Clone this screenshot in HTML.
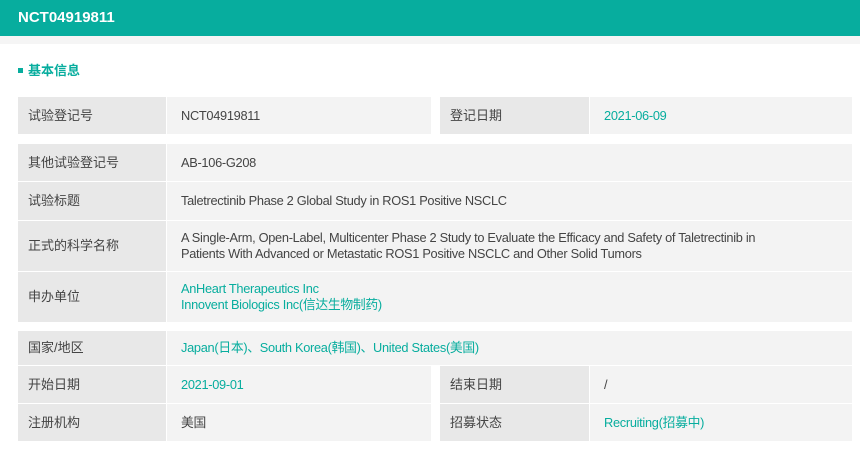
<!DOCTYPE html>
<html><head><meta charset="utf-8"><style>
*{margin:0;padding:0;box-sizing:border-box}
body{width:860px;height:460px;background:#fff;font-family:"Liberation Sans","Noto Sans CJK SC",sans-serif;font-size:13px;color:#444;position:relative;overflow:hidden}
.hd{height:36px;background:#07ad9e;color:#fff;font-weight:bold;font-size:15px;line-height:36px;padding-left:18px}
.strip{height:8px;background:#f5f5f5}
.sec{position:absolute;left:18px;top:63px;color:#07ad9e;font-weight:bold;font-size:13px;line-height:16px}
.sec i{display:inline-block;width:5px;height:5px;background:#07ad9e;margin-right:5px;vertical-align:2px}
.c{position:absolute;display:flex;align-items:center;padding-left:10px;line-height:16px}
.l{background:#e8e8e8}
.v{background:#f3f3f3;padding-left:14px;letter-spacing:-0.3px;font-size:12.8px}
.t{color:#07ad9e}
</style></head><body>
<div class="hd">NCT04919811</div>
<div class="strip"></div>
<div class="sec"><i></i>基本信息</div>

<div class="c l" style="left:18px;top:97px;width:148px;height:37px">试验登记号</div>
<div class="c v" style="left:167px;top:97px;width:264px;height:37px">NCT04919811</div>
<div class="c l" style="left:440px;top:97px;width:149px;height:37px">登记日期</div>
<div class="c v t" style="left:590px;top:97px;width:262px;height:37px">2021-06-09</div>

<div class="c l" style="left:18px;top:144px;width:148px;height:37px">其他试验登记号</div>
<div class="c v" style="left:167px;top:144px;width:685px;height:37px">AB-106-G208</div>
<div class="c l" style="left:18px;top:182px;width:148px;height:38px">试验标题</div>
<div class="c v" style="left:167px;top:182px;width:685px;height:38px">Taletrectinib Phase 2 Global Study in ROS1 Positive NSCLC</div>
<div class="c l" style="left:18px;top:221px;width:148px;height:50px">正式的科学名称</div>
<div class="c v" style="left:167px;top:221px;width:685px;height:50px;padding-right:60px">A Single-Arm, Open-Label, Multicenter Phase 2 Study to Evaluate the Efficacy and Safety of Taletrectinib in Patients With Advanced or Metastatic ROS1 Positive NSCLC and Other Solid Tumors</div>
<div class="c l" style="left:18px;top:272px;width:148px;height:50px">申办单位</div>
<div class="c v t" style="left:167px;top:272px;width:685px;height:50px">AnHeart Therapeutics Inc<br>Innovent Biologics Inc(信达生物制药)</div>

<div class="c l" style="left:18px;top:331px;width:148px;height:34px">国家/地区</div>
<div class="c v t" style="left:167px;top:331px;width:685px;height:34px">Japan(日本)、South Korea(韩国)、United States(美国)</div>
<div class="c l" style="left:18px;top:366px;width:148px;height:37px">开始日期</div>
<div class="c v t" style="left:167px;top:366px;width:264px;height:37px">2021-09-01</div>
<div class="c l" style="left:440px;top:366px;width:149px;height:37px">结束日期</div>
<div class="c v" style="left:590px;top:366px;width:262px;height:37px">/</div>
<div class="c l" style="left:18px;top:404px;width:148px;height:37px">注册机构</div>
<div class="c v" style="left:167px;top:404px;width:264px;height:37px">美国</div>
<div class="c l" style="left:440px;top:404px;width:149px;height:37px">招募状态</div>
<div class="c v t" style="left:590px;top:404px;width:262px;height:37px">Recruiting(招募中)</div>
</body></html>
